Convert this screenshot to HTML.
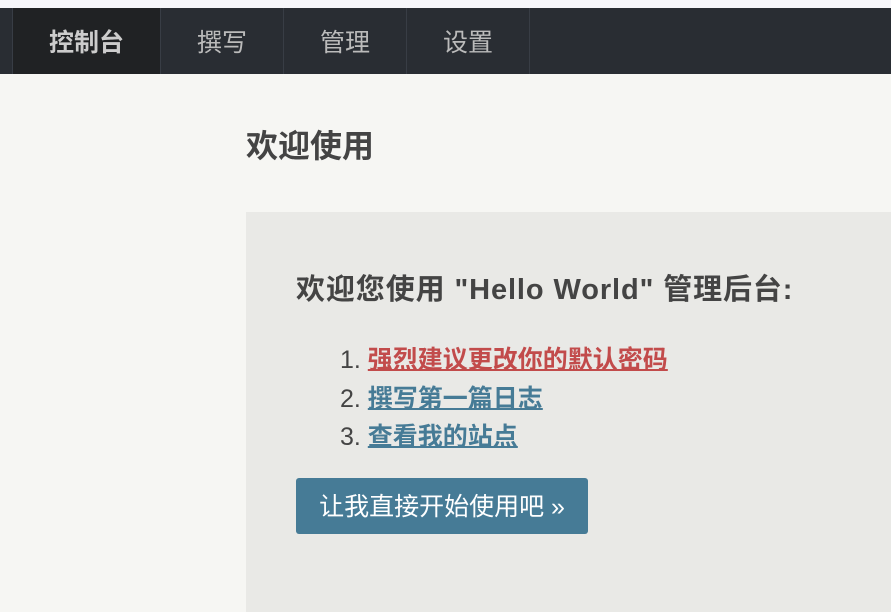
<!DOCTYPE html>
<html><head><meta charset="utf-8"><style>
body{margin:0;width:891px;height:567px;overflow:hidden;background:#f6f6f3;font-family:"Liberation Sans","Noto Sans CJK SC",sans-serif;color:#444;position:relative}
.top{position:absolute;left:0;top:0;width:891px;height:8px;background:#f6f6fa}
.nav{position:absolute;left:0;top:8px;width:891px;height:66px;background:#292d33}
.nav a{position:absolute;top:0;height:66px;line-height:70px;text-align:center;color:#bbb;font-size:25px;border-left:1px solid #383d45;box-sizing:border-box}
.nav a.act{background:#202224;color:#ccc;font-weight:bold}
h2{position:absolute;left:246px;top:121px;margin:0;font-size:32px;font-weight:bold;color:#444}
.box{position:absolute;left:246px;top:212px;width:700px;height:400px;background:#e9e9e6}
h3{position:absolute;left:50px;top:54px;margin:0;font-size:29px;font-weight:bold;color:#444;white-space:nowrap;letter-spacing:0.9px}
ol{position:absolute;left:94px;top:129px;margin:0;padding:0;list-style:none;font-size:25px;line-height:38.5px}
ol a{font-weight:bold;text-decoration:underline;text-decoration-thickness:2px;color:#467b96}
ol a.red{color:#c24b4b}
.btn{position:absolute;left:50px;top:266px;width:292px;height:56px;background:#467b96;border-radius:3px;color:#fff;font-size:25px;line-height:58px;text-align:center}
</style></head><body>
<div class="top"></div>
<div class="nav">
<a class="act" style="left:12px;width:148px">控制台</a>
<a style="left:160px;width:123px">撰写</a>
<a style="left:283px;width:123px">管理</a>
<a style="left:406px;width:124px;border-right:1px solid #383d45">设置</a>
</div>
<h2>欢迎使用</h2>
<div class="box">
<h3>欢迎您使用 "Hello World" 管理后台:</h3>
<ol>
<li>1. <a class="red">强烈建议更改你的默认密码</a></li>
<li>2. <a>撰写第一篇日志</a></li>
<li>3. <a>查看我的站点</a></li>
</ol>
<div class="btn">让我直接开始使用吧 »</div>
</div>
</body></html>
